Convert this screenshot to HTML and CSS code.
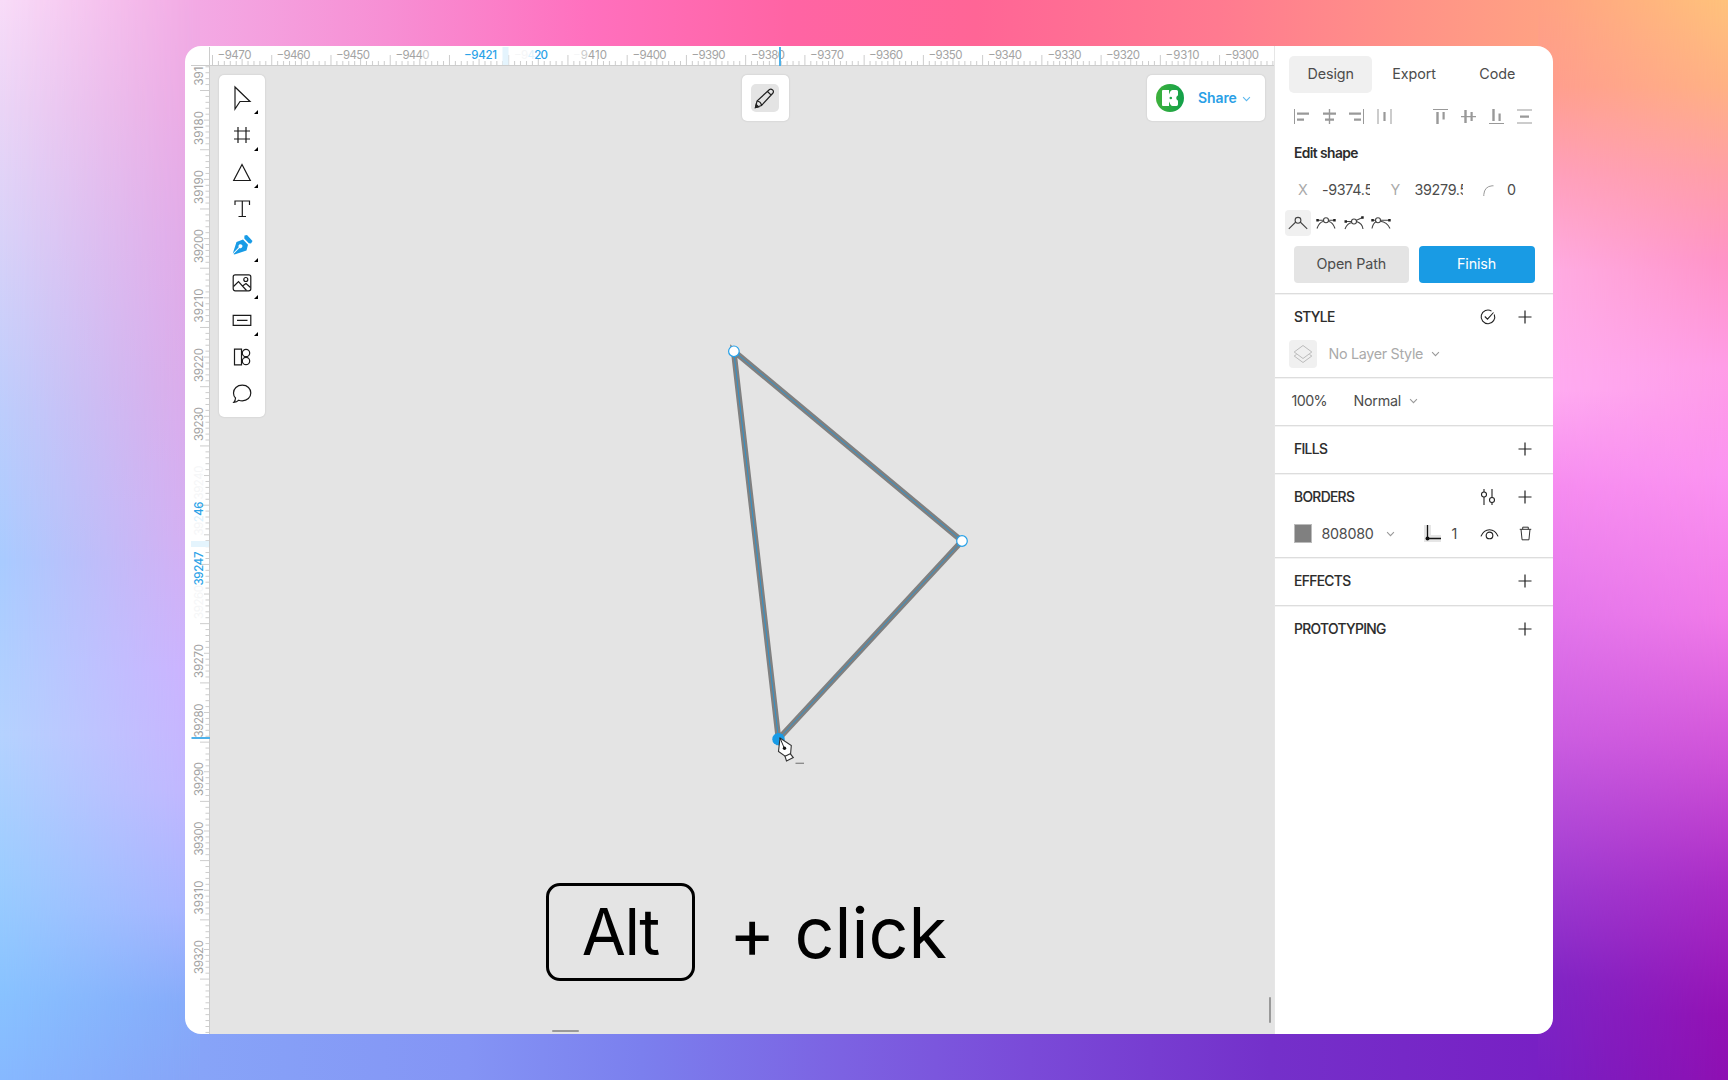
FILE: index.html
```html
<!DOCTYPE html>
<html lang="en">
<head>
<meta charset="utf-8">
<title>Vector editor</title>
<link rel="stylesheet" href="styles.css">
</head>
<body>
<div class="backdrop">
  <div class="side side-left"></div>
  <div class="middle"><div class="strip strip-top"></div><div class="strip strip-bottom"></div></div>
  <div class="side side-right"></div>
</div>

<main class="window">
  <svg class="ruler-top" viewBox="185 46 1089 20">
    <defs>
      <pattern id="tx" patternUnits="userSpaceOnUse" x="212" y="46" width="59.24" height="20">
        <path class="tick" d="M.5 9v11M30.1 13v7M6.4 15v5M12.3 15v5M18.3 15v5M24.2 15v5M36 15v5M42 15v5M47.9 15v5M53.8 15v5"/>
      </pattern>
    </defs>
    <rect x="210" y="46" width="1064" height="19" fill="url(#tx)"/>
    <rect x="502.500" y="47" width="6" height="18" class="band"/>
    <path class="edge" d="M191 65.500H1274M209.500 47V66"/>
    <g class="num">
      <text x="217.500" y="58.600" textLength="34">−9470</text>
      <text x="276.500" y="58.600" textLength="34">−9460</text>
      <text x="336" y="58.600" textLength="34">−9450</text>
      <text x="395.500" y="58.600" textLength="34">−944<tspan class="dim">0</tspan></text>
      <text x="464" y="58.600" textLength="33" class="hot">−9421</text>
      <text x="514" y="58.600" textLength="34"><tspan class="ghost">−9</tspan><tspan class="icy">4</tspan><tspan class="hot">20</tspan></text>
      <text x="573" y="58.600" textLength="34"><tspan class="ghost">−</tspan><tspan class="dim">9</tspan>410</text>
      <text x="632.500" y="58.600" textLength="34">−9400</text>
      <text x="691.500" y="58.600" textLength="34">−9390</text>
      <text x="751" y="58.600" textLength="34">−9380</text>
      <text x="810" y="58.600" textLength="34">−9370</text>
      <text x="869" y="58.600" textLength="34">−9360</text>
      <text x="928.500" y="58.600" textLength="34">−9350</text>
      <text x="988" y="58.600" textLength="34">−9340</text>
      <text x="1047.500" y="58.600" textLength="34">−9330</text>
      <text x="1106" y="58.600" textLength="34">−9320</text>
      <text x="1165.500" y="58.600" textLength="34">−9310</text>
      <text x="1225" y="58.600" textLength="34">−9300</text>
    </g>
    <rect x="779" y="47" width="2" height="19" class="mark"/>
  </svg>

  <svg class="ruler-left" viewBox="185 66 25 968">
    <defs>
      <pattern id="ty" patternUnits="userSpaceOnUse" x="185" y="90" width="25" height="59.24">
        <path class="tick" d="M15 .5h10M19 30.100h6M20.500 6.400h5M20.500 12.300h5M20.500 18.300h5M20.500 24.200h5M20.500 36h5M20.500 42h5M20.500 47.900h5M20.500 53.800h5"/>
      </pattern>
    </defs>
    <rect x="185" y="66" width="24" height="968" fill="url(#ty)"/>
    <path class="edge" d="M209.500 66V1034"/>
    <rect x="191" y="541" width="18" height="6" class="band"/>
    <g class="num">
      <text transform="translate(203 85.500) rotate(-90)">391</text>
      <text transform="translate(203 145) rotate(-90)" textLength="34">39180</text>
      <text transform="translate(203 204) rotate(-90)" textLength="34">39190</text>
      <text transform="translate(203 263) rotate(-90)" textLength="34">39200</text>
      <text transform="translate(203 322.500) rotate(-90)" textLength="34">39210</text>
      <text transform="translate(203 382) rotate(-90)" textLength="34">39220</text>
      <text transform="translate(203 441) rotate(-90)" textLength="34">39230</text>
      <text transform="translate(203 499.500) rotate(-90)" textLength="34" class="ghost">39240</text>
      <text transform="translate(203 535.500) rotate(-90)" textLength="34"><tspan class="ghost">39</tspan><tspan class="icy">2</tspan><tspan class="hot">46</tspan></text>
      <text transform="translate(203 585.500) rotate(-90)" textLength="34" class="hot">39247</text>
      <text transform="translate(203 619) rotate(-90)" textLength="34" class="ghost">39260</text>
      <text transform="translate(203 678) rotate(-90)" textLength="34">39270</text>
      <text transform="translate(203 737.500) rotate(-90)" textLength="34">39280</text>
      <text transform="translate(203 796) rotate(-90)" textLength="34">39290</text>
      <text transform="translate(203 855.500) rotate(-90)" textLength="34">39300</text>
      <text transform="translate(203 914.500) rotate(-90)" textLength="34">39310</text>
      <text transform="translate(203 974) rotate(-90)" textLength="34">39320</text>
    </g>
    <rect x="191.500" y="737" width="19" height="2" class="mark"/>
  </svg>

  <section class="canvas">
    <svg class="art" viewBox="210 66 1064 968">
      <path d="M733.700 351L962 541L778.500 739Z" class="shape"/>
      <path d="M733.700 351L962 541L778.500 739Z" class="guide"/>
      <circle cx="733.900" cy="351.300" r="5.300" class="node"/>
      <circle cx="962" cy="541" r="5.300" class="node"/>
      <circle cx="778.500" cy="739.200" r="6.200" class="node-on"/>
      <g transform="translate(779.500 738)">
        <path d="M.5 0L-1 13.500L6 18.500L11 16.500L11.800 7.500Z" class="nib"/>
        <path d="M5.500 18.200L10.800 15.800L13.800 19.600L7 23Z" class="nib"/>
        <path d="M.5 0L4.500 9.500" class="nib-line"/>
        <circle cx="5" cy="10.300" r="1.700"/>
      </g>
      <rect x="795.500" y="762.700" width="8.500" height="1.100" fill="#777"/>
    </svg>

    <nav class="toolbar">
      <span class="tool more"><svg viewBox="0 0 24 24"><path d="M5 1V23L10 15.500H20Z"/></svg></span>
      <span class="tool more"><svg viewBox="0 0 24 24"><path d="M8 4v16M16 4v16M4 8h16M4 16h16"/></svg></span>
      <span class="tool more"><svg viewBox="0 0 24 24"><path d="M12 4.500L20.300 20.500H3.700Z"/></svg></span>
      <span class="tool"><svg viewBox="0 0 24 24"><path d="M5 8V4H19.500V8M12.300 4V19.500M8.500 19.500H16"/></svg></span>
      <span class="tool more"><svg viewBox="0 0 24 24"><g class="solid"><path d="M14.500 1.500L17 1L22.500 7L21 9.500L18.800 9.200L14.300 4.500Z"/><path d="M13 5.500L18 10.700L16.500 16.500L4.500 20.500L3.500 20L9.500 14A2 2 0 1 0 8.700 13.200L2.800 19.500L6.500 8Z"/></g></svg></span>
      <span class="tool more"><svg viewBox="0 0 24 24"><rect x="3.200" y="3.800" width="17.600" height="16" rx="2"/><circle cx="15.800" cy="8.500" r="2"/><path d="M3.500 15.500L8.500 10.500L16.500 19.500M12.500 15L16 12.500L20.500 16.500"/></svg></span>
      <span class="tool more"><svg viewBox="0 0 24 24"><path d="M3.200 7.300H20.800V17.300H3.200ZM7 12.300H17.500"/></svg></span>
      <span class="tool"><svg viewBox="0 0 24 24"><path d="M4.500 4.200H11.500V19.800H4.500Z"/><circle cx="16" cy="8" r="3.700"/><circle cx="16" cy="16" r="3.700"/></svg></span>
      <span class="tool"><svg viewBox="0 0 24 24"><path d="M12.300 3.200C17.500 3.200 20.800 6.600 20.800 11S17.200 18.800 12.300 18.800C11 18.800 9.800 18.600 8.800 18.200C7.500 19.500 6 20.300 3.800 20.300C5 19 5.500 17.500 5.500 16C4 14.600 3.500 12.800 3.500 11C3.500 6.600 7 3.200 12.300 3.200Z"/></svg></span>
    </nav>

    <div class="float edit"><span><svg viewBox="0 0 28 28"><path d="M4.500 23.500L6 17L18.500 5.500C20.500 4 23.500 7 22 9L10.500 21.500ZM6 17Q10 17.500 10.500 21.500M16.500 7.500L20.200 11.200"/><path d="M4.500 23.500L5.200 20.500L7.500 22.800Z" fill="#222"/></svg></span></div>

    <div class="float share">
      <svg class="avatar" viewBox="0 0 28 28"><defs><linearGradient id="gr"><stop offset="0" stop-color="#3fb13c"/><stop offset="1" stop-color="#12a04a"/></linearGradient></defs><circle cx="14" cy="14" r="14" fill="url(#gr)"/><path fill="#fff" d="M7 6H13V22H7Q6 22 6 21V7Q6 6 7 6ZM13 10.500L14.300 7.500Q15 5.900 16.500 5.900H20.500Q22 6 22 7.500V10.500Q22 12 20.800 12.300Q19.600 14 20.800 15.700Q22 16 22 17.500V20.300Q22 21.900 20.500 21.900H16.500Q15 21.900 14.300 20.300L13 17.500Z"/><circle cx="14.800" cy="14" r="1.300" fill="#1fa646"/></svg>
      <b>Share</b>
      <svg class="chev" viewBox="0 0 10 6"><path d="M1.200 1L5 4.800L8.800 1"/></svg>
    </div>

    <div class="caption"><kbd>Alt</kbd><span class="plus">+</span><span class="click">click</span></div>
    <i class="thumb-x"></i><i class="thumb-y"></i>
  </section>

  <aside class="panel">
    <div class="tabs"><span class="on">Design</span><span>Export</span><span>Code</span></div>
    <div class="align">
      <div>
        <svg viewBox="0 0 15 15"><path d="M0 0h1v15H0zM3 3.500h12v2.200H3zM3 9.500h7v2.200H3z"/></svg>
        <svg viewBox="0 0 15 15"><path d="M6.800 0h1.400v15H6.800zM1 3.500h13v2.200H1zM3 9.500h9v2.200H3z"/></svg>
        <svg viewBox="0 0 15 15"><path d="M14 0h1v15h-1zM0 3.500h12v2.200H0zM5 9.500h7v2.200H5z"/></svg>
        <svg viewBox="0 0 15 15"><path d="M.5 0h1v15h-1zM13.500 0h1v15h-1zM6.400 3h2.200v9H6.400z"/></svg>
      </div>
      <div>
        <svg viewBox="0 0 15 15"><path d="M0 0h15v1H0zM3.300 3h2.400v12H3.300zM9.500 3h2.200v7.500H9.500z"/></svg>
        <svg viewBox="0 0 15 15"><path d="M0 6.900h15v1.300H0zM3.300 1h2.400v13H3.300zM9.500 3h2.200v9H9.500z"/></svg>
        <svg viewBox="0 0 15 15"><path d="M0 14h15v1H0zM3.300 0h2.400v12H3.300zM9.500 4.500h2.200V12H9.500z"/></svg>
        <svg viewBox="0 0 15 15"><path d="M0 .5h15v1H0zM0 13.500h15v1H0zM3 6.500h9v2.200H3z"/></svg>
      </div>
    </div>
    <h2 class="edit-title">Edit shape</h2>
    <div class="fields">
      <label>X</label><span class="val">-9374.5</span>
      <label>Y</label><span class="val">39279.5</span>
      <svg class="arc" viewBox="0 0 11 11"><path d="M.8 11V9.500Q1.500 1.500 9 .8H10.500"/></svg><span class="rad">0</span>
    </div>
    <div class="modes">
      <span class="on"><svg viewBox="0 0 20 14"><path d="M.8 12.800L7.800 6M12.200 6L19.200 12.800"/><circle cx="10" cy="4.300" r="2.900"/></svg></span>
      <span><svg viewBox="0 0 20 14"><path d="M1.500 4.300H7.300M12.700 4.300H18.500M1 12.500Q3 6.500 7.600 5.300M19 12.500Q17 6.500 12.400 5.300"/><circle cx="10" cy="4.300" r="2.500"/><path class="dot" d="M.3 3h2.500v2.500H.3zM17.200 3h2.500v2.500h-2.500z"/></svg></span>
      <span><svg viewBox="0 0 20 14"><path d="M2 5.500H7.500M12 4.500L18.500 1.500M1 13Q3 7.500 7.800 6.500M19 13Q18.500 7.500 12.600 5.500"/><circle cx="10" cy="5.500" r="2.500"/><path class="dot" d="M.5 4.300H3v2.500H.5zM17.200 .2h2.500v2.500h-2.500z"/></svg></span>
      <span><svg viewBox="0 0 20 14"><path d="M2 4.300H4.500M9.500 4.300H18.500M1 12.500Q1.800 7.500 5.300 5.500M19 12.500Q16 6 9.300 5.300"/><circle cx="7" cy="4.300" r="2.500"/><path class="dot" d="M.3 3h2.500v2.500H.3zM17.200 3h2.500v2.500h-2.500z"/></svg></span>
    </div>
    <div class="buttons"><button>Open Path</button><button class="primary">Finish</button></div>

    <section class="sec style">
      <header><h2>STYLE</h2><svg class="ico" viewBox="0 0 16 16"><path d="M14.300 5.500A6.800 6.800 0 1 1 11.500 2.100M4.800 7.500L7.500 10.200L13.500 3.500"/></svg><svg class="add" viewBox="0 0 14 14"><path d="M7 .5v13M.5 7h13"/></svg></header>
      <div class="row layer"><span class="sq"><svg viewBox="0 0 20 20"><path d="M10 1.500L18.800 8L10 14.500L1.200 8ZM3.500 10.500L1.200 12L10 18.500L18.800 12L16.500 10.500"/></svg></span><span>No Layer Style</span><svg class="chev" viewBox="0 0 10 6"><path d="M1.200 1L5 4.800L8.800 1"/></svg></div>
    </section>
    <section class="sec blend"><span class="pct">100%</span><span>Normal</span><svg class="chev" viewBox="0 0 10 6"><path d="M1.200 1L5 4.800L8.800 1"/></svg></section>
    <section class="sec"><header><h2>FILLS</h2><svg class="add" viewBox="0 0 14 14"><path d="M7 .5v13M.5 7h13"/></svg></header></section>
    <section class="sec borders">
      <header><h2>BORDERS</h2><svg class="ico" viewBox="0 0 16 16"><path d="M4 0V3M4 8V16M12 0V8.500M12 13.500V16"/><circle cx="4" cy="5.500" r="2.500"/><circle cx="12" cy="11" r="2.500"/></svg><svg class="add" viewBox="0 0 14 14"><path d="M7 .5v13M.5 7h13"/></svg></header>
      <div class="row paint"><i class="swatch"></i><span class="hex">808080</span><svg class="chev" viewBox="0 0 10 6"><path d="M1.200 1L5 4.800L8.800 1"/></svg>
        <svg class="pos" viewBox="0 0 17 17"><path d="M0 0h7v10h10v7H0z" fill="#e6e6e6"/><path d="M3.500 0V13.500H17" fill="none" stroke="#111" stroke-width="1.300"/><circle cx="3.500" cy="13.500" r="2"/></svg>
        <span class="one">1</span>
        <svg class="eye" viewBox="0 0 20 12"><path d="M1 8.500C5 -.8 15 -.8 19 8.500"/><circle cx="10" cy="7.500" r="3.500"/></svg>
        <svg class="bin" viewBox="0 0 14 16"><path d="M.8 3.500H13.200M4 3.300V1.200H10V3.300M2.200 3.800L3.300 14.800H10.700L11.800 3.800"/></svg></div>
    </section>
    <section class="sec"><header><h2>EFFECTS</h2><svg class="add" viewBox="0 0 14 14"><path d="M7 .5v13M.5 7h13"/></svg></header></section>
    <section class="sec"><header><h2>PROTOTYPING</h2><svg class="add" viewBox="0 0 14 14"><path d="M7 .5v13M.5 7h13"/></svg></header></section>
  </aside>
</main>
</body>
</html>
```
FILE: styles.css
```css
* { box-sizing: border-box; }
body { margin: 0; width: 1728px; height: 1080px; overflow: hidden; position: relative; font: 14.3px/20px Inter, "Liberation Sans", sans-serif; color: #4c4c4c; padding: 46px 175px 46px 185px; }
svg { display: block; overflow: visible; fill: none; flex: none; }

/* backdrop: each side blends an outer and an inner vertical gradient */
.backdrop { position: absolute; inset: 0; display: grid; grid-template-columns: 200px 1fr 190px; }
.side { position: relative; }
.side::before { content: ""; position: absolute; inset: 0; }
.side-left { background: linear-gradient(#f3a9e4 0, #eca9e4 10%, #e3a9e8 22%, #deaaea 36%, #d8aef2 50%, #ceb2ff 62%, #c4b6ff 73%, #aab4ff 84%, #86aafa 93%, #87a4f8 100%); }
.side-left::before { background: linear-gradient(#f8dcf8 0, #ead5f6 10%, #d8d2f8 22%, #bccdfc 38%, #a8cbff 52%, #b4d2ff 68%, #9accff 82%, #88c2ff 92%, #86b8ff 100%); -webkit-mask-image: linear-gradient(90deg, #000, transparent); mask-image: linear-gradient(90deg, #000, transparent); }
.side-right { background: linear-gradient(#ffa183 0, #ff9d8f 8%, #ffa0bd 16%, #ffaee4 25%, #ffadf2 36%, #f68cf0 45%, #e276ec 57%, #cc5fe2 68%, #a441d4 80%, #7f26c6 91%, #7820c4 100%); }
.side-right::before { background: linear-gradient(#ffc27b 0, #ffb184 8%, #ff9fa6 16%, #ff93c6 24%, #ff9ce6 34%, #fb93f0 44%, #f07ae8 57%, #cf52d8 70%, #aa2cc6 82%, #9312b4 94%, #8e10b2 100%); -webkit-mask-image: linear-gradient(270deg, #000, transparent); mask-image: linear-gradient(270deg, #000, transparent); }
.middle { display: flex; flex-direction: column; justify-content: space-between; }
.strip { height: 60px; }
.strip-top { background: linear-gradient(90deg, #f3a9e4 0, #f78fd4 14%, #ff70be 29%, #ff64a4 44%, #ff6596 58%, #ff7a90 76%, #ff9088 89%, #ffa183 100%); }
.strip-bottom { background: linear-gradient(90deg, #87a4f8 0, #8494f5 20%, #7b7fee 33%, #7c62e2 48%, #7a4ad8 62%, #7430ca 80%, #7820c4 100%); }

.window { position: relative; width: 1368px; height: 987.5px; border-radius: 16px; overflow: hidden; background: #fff; display: grid; grid-template: 20px 968px / 25px 1064px 279px; grid-template-areas: "top top panel" "left canvas panel"; }
.ruler-top { grid-area: top; width: 1089px; height: 20px; overflow: hidden; }
.ruler-left { grid-area: left; width: 25px; height: 968px; overflow: hidden; }
.tick { stroke: #ccc; stroke-width: 1; }
.edge { stroke: #ccc; }
.band { fill: #e4f4fd; }
.mark { fill: #4db1ea; }
.num { fill: #a3a3a3; font-size: 11.5px; }
.hot { fill: #2ba3e8; font-weight: 500; }
.dim { fill: #ccc; }
.icy { fill: #dcf1fc; }
.ghost { fill: #f5f6f7; }

.canvas { grid-area: canvas; position: relative; background: #e4e4e4; }
.art { position: absolute; inset: 0; width: 1064px; height: 968px; }
.shape { stroke: #808080; stroke-width: 5.7; }
.guide { stroke: #2e93cc; stroke-width: 1; }
.node { fill: #fff; stroke: #27a1e8; stroke-width: 1.2; }
.node-on { fill: #189be6; }
.nib { fill: #fff; stroke: #333; stroke-width: 1.1; }
.nib-line { stroke: #222; }
.art g circle { fill: #111; }

.toolbar, .float { position: absolute; background: #fff; border-radius: 5px; box-shadow: 0 0 2px rgba(0,0,0,.16); }
.toolbar { left: 9px; top: 8.5px; width: 46px; height: 342px; padding-top: 5.5px; display: flex; flex-direction: column; }
.tool { position: relative; height: 37px; padding: 6px 0 0 11px; }
.tool svg { width: 24px; height: 24px; stroke: #1a1a1a; stroke-width: 1.2; }
.tool .solid { fill: #189be6; stroke: none; }
.more::after { content: ""; position: absolute; right: 7px; top: 30px; border-style: solid; border-width: 0 0 4px 4px; border-color: transparent transparent #000; }
.edit { left: 532px; top: 8.5px; width: 46.5px; height: 46.5px; padding: 9.5px 9px; }
.edit span { display: block; width: 28px; height: 28px; border-radius: 5px; background: #e4e4e4; }
.edit svg { stroke: #222; stroke-width: 1.2; }
.share { left: 937px; top: 8.5px; width: 118px; height: 46.5px; display: flex; align-items: center; padding-left: 9px; color: #2a9fe6; }
.avatar { width: 28px; height: 28px; margin-right: 14px; }
.share b { font-weight: 600; font-size: 14px; width: 43.5px; letter-spacing: -.1px; }
.chev { width: 9px; height: 6px; stroke: #999; stroke-width: 1.2; }
.share .chev { stroke: #5cb8ee; margin-top: 2px; }

.caption { position: absolute; left: 335.5px; top: 817px; display: flex; color: #000; }
kbd { width: 149.5px; height: 98px; border: 3px solid #000; border-radius: 14px; font: 400 64px/92px Inter, sans-serif; letter-spacing: -1.500px; text-align: center; }
.plus, .click { font-size: 70px; line-height: 99px; }
.plus { margin-left: 34px; width: 65.5px; }
.thumb-x, .thumb-y { position: absolute; background: #999; border-radius: 1px; }
.thumb-x { left: 342px; top: 964px; width: 27px; height: 2px; }
.thumb-y { left: 1058.500px; top: 931px; width: 2px; height: 26px; }

.panel { grid-area: panel; border-left: 1px solid #e6e6e6; letter-spacing: -.25px; }
.tabs { display: flex; padding: 10px 14px 0; letter-spacing: -.05px; }
.tabs span { width: 83.500px; height: 37px; line-height: 36px; text-align: center; border-radius: 5px; }
.tabs .on { background: #f0f0f0; }
.align { display: flex; justify-content: space-between; padding: 15.5px 21.5px 0 19px; }
.align div { display: flex; gap: 12.700px; }
.align svg { width: 15px; height: 15px; fill: #999; }
h2 { margin: 0; font: 500 13.800px/20px Inter, sans-serif; color: #2c2c2c; }
.edit-title { margin: 19.5px 0 0 19px; font-weight: 600; letter-spacing: -.58px; }
.fields { display: flex; align-items: center; padding-left: 23px; margin-top: 17px; height: 20px; }
.fields label { color: #aaa; width: 24px; }
.val { width: 48px; overflow: hidden; white-space: nowrap; margin-right: 20.5px; letter-spacing: -.3px; }
.arc { width: 11px; height: 11px; stroke: #999; margin: 1px 13px 0 0; }
.modes { display: flex; padding-left: 10px; margin-top: 9.5px; gap: 1.800px; }
.modes span { width: 26px; height: 26px; border-radius: 4px; padding: 6px 3px; }
.modes .on { background: #f0f0f0; }
.modes svg { width: 20px; height: 14px; stroke: #444; stroke-width: 1.1; }
.dot { fill: #222; stroke: none; }
.buttons { display: flex; gap: 9.500px; padding: 10px 0 10px 18.5px; }
button { width: 115.500px; height: 37px; border: 0; border-radius: 4px; background: #e4e4e4; color: #4c4c4c; font: inherit; letter-spacing: -.15px; padding: 0 0 1px; }
.primary { background: #199be4; color: #fff; width: 116px; }

.sec { border-top: 1px solid #ddd; height: 47.800px; padding: 13px 0 0 19px; box-shadow: inset 0 1px #f3f3f3; }
.sec header { display: flex; align-items: center; height: 20px; padding-right: 21.5px; }
.sec h2 { flex: 1; letter-spacing: -.65px; }
.sec h2 { -webkit-text-stroke: .1px; }
.ico { width: 16px; height: 16px; stroke: #222; stroke-width: 1.1; margin-right: 21.5px; }
.add { width: 14px; height: 14px; stroke: #222; stroke-width: 1.2; }
.style, .borders { height: 84.500px; }
.row { display: flex; align-items: center; }
.layer { margin: 13px 0 0 -5px; color: #aaa; height: 28px; letter-spacing: -.3px; }
.sq { width: 28px; height: 28px; background: #f0f0f0; border-radius: 4px; padding: 4px; margin-right: 11.5px; }
.sq svg { width: 20px; height: 20px; stroke: #bbb; }
.layer .chev { margin-left: 8px; }
.blend { display: flex; align-items: center; padding: 0 0 0 16.5px; }
.pct { width: 62px; letter-spacing: -.6px; }
.blend .chev { margin-left: 8px; }
.paint { height: 20px; margin-top: 17px; }
.swatch { width: 18px; height: 19px; background: #808080; border: 1px solid #bbb; margin-right: 9.5px; }
.hex { width: 64px; }
.pos { width: 17px; height: 17px; margin: 0 11px 0 29px; }
.pos circle { fill: #111; }
.one { width: 28px; }
.eye { width: 19px; height: 12px; stroke: #222; stroke-width: 1.2; }
.bin { width: 13px; height: 15px; stroke: #222; margin-left: 20px; }
```
